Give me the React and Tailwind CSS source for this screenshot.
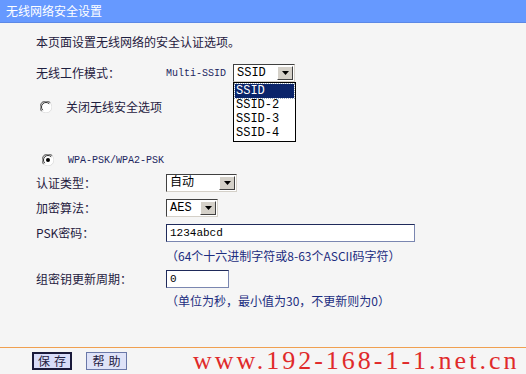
import React from "react";

const cjk = { fontFamily: '"Noto Sans CJK SC", "Noto Sans", sans-serif' };
const mono = { fontFamily: '"Liberation Mono", "Noto Sans CJK SC", monospace' };

function Radio({ checked }) {
  return (
    <svg width="12" height="12" viewBox="0 0 12 12" className="shrink-0">
      <circle cx="6" cy="6" r="5.5" fill="#ffffff" />
      <path d="M10.2 1.8 A5.6 5.6 0 0 0 1.8 10.2" fill="none" stroke="#808080" strokeWidth="1.2" />
      <path d="M9.2 2.8 A4.4 4.4 0 0 0 2.8 9.2" fill="none" stroke="#303030" strokeWidth="1" />
      <path d="M1.8 10.2 A5.6 5.6 0 0 0 10.2 1.8" fill="none" stroke="#e0e0e0" strokeWidth="1" />
      {checked && <circle cx="6" cy="6" r="2" fill="#000000" />}
    </svg>
  );
}

function Select({ value, width }) {
  return (
    <div
      className="h-[18px] flex items-center bg-white border border-t-[#404040] border-l-[#404040] border-r-[#d4d0c8] border-b-[#d4d0c8]"
      style={{ width }}
    >
      <span className="flex-1 pl-[3px] text-[12px] leading-none text-black" style={mono}>
        {value}
      </span>
      <div className="w-[16px] h-[14px] mr-[1px] bg-[#d4d0c8] border border-t-white border-l-white border-r-[#404040] border-b-[#404040] flex items-center justify-center">
        <svg width="7" height="4" viewBox="0 0 7 4">
          <path d="M0 0 H7 L3.5 4 Z" fill="#000" />
        </svg>
      </div>
    </div>
  );
}

function Row({ label, children, className = "" }) {
  return (
    <div className={`h-[18px] flex items-center ${className}`}>
      <div className="w-[130px] text-[12px] text-[#1f2040]" style={cjk}>{label}</div>
      {children}
    </div>
  );
}

export default function App() {
  return (
    <div className="w-[526px] h-[374px] bg-[#f5f5f5] flex flex-col overflow-hidden" style={cjk}>
      <div className="h-[23px] bg-[#6699ff] border-b border-[#5c88e6] flex items-center pl-[6px]">
        <span className="text-white text-[12px] leading-none">无线网络安全设置</span>
      </div>

      <div className="pl-[36px] flex flex-col">
        <div className="h-[18px] mt-[10px] flex items-center text-[12px] text-[#1f2040]">
          本页面设置无线网络的安全认证选项。
        </div>

        <Row label="无线工作模式：" className="mt-[13px]">
          <span className="text-[10px] text-[#1c2660] w-[67px]" style={mono}>Multi-SSID</span>
          <div className="relative">
            <Select value="SSID" width={62} />
            <div className="absolute left-0 top-[18px] w-[63px] bg-white border border-black flex flex-col py-[1px] z-10">
              <div className="h-[14px] mx-[1px] bg-[#0a246a] text-white outline-1 outline-dotted outline-[#9ab] text-[12px] leading-[14px] pl-[1px]" style={mono}>SSID</div>
              <div className="h-[14px] text-[12px] leading-[14px] pl-[2px] text-black" style={mono}>SSID-2</div>
              <div className="h-[14px] text-[12px] leading-[14px] pl-[2px] text-black" style={mono}>SSID-3</div>
              <div className="h-[14px] text-[12px] leading-[14px] pl-[2px] text-black" style={mono}>SSID-4</div>
            </div>
          </div>
        </Row>

        <div className="h-[18px] mt-[16px] flex items-center pl-[4px] gap-[14px]">
          <Radio />
          <span className="text-[12px] text-[#1f2040]">关闭无线安全选项</span>
        </div>

        <div className="h-[18px] mt-[35px] flex items-center pl-[6px] gap-[14px]">
          <Radio checked />
          <span className="text-[10px] text-[#1c2660]" style={mono}>WPA-PSK/WPA2-PSK</span>
        </div>

        <Row label="认证类型：" className="mt-[5px]">
          <Select value="自动" width={71} />
        </Row>

        <Row label="加密算法：" className="mt-[7px]">
          <Select value="AES" width={52} />
        </Row>

        <Row label="PSK密码：" className="mt-[7px]">
          <div className="w-[249px] h-[18px] bg-white border border-t-[#1f2a5a] border-l-[#1f2a5a] border-r-[#7a86b0] border-b-[#7a86b0] flex items-center pl-[3px]">
            <span className="text-[11px] text-black" style={mono}>1234abcd</span>
          </div>
        </Row>

        <Row label="" className="mt-[5px]">
          <span className="text-[12px] text-[#1c2d80]">（64个十六进制字符或8-63个ASCII码字符）</span>
        </Row>

        <Row label="组密钥更新周期：" className="mt-[5px]">
          <div className="w-[63px] h-[18px] bg-white border border-t-[#1f2a5a] border-l-[#1f2a5a] border-r-[#7a86b0] border-b-[#7a86b0] flex items-center pl-[3px]">
            <span className="text-[11px] text-black" style={mono}>0</span>
          </div>
        </Row>

        <Row label="" className="mt-[4px]">
          <span className="text-[12px] text-[#1c2d80]">（单位为秒，最小值为30，不更新则为0）</span>
        </Row>
      </div>

      <div className="mt-[37px] h-px bg-[#f0a050]" />
      <div className="flex items-center h-[26px] pl-[32px]">
        <button className="w-[40px] h-[18px] bg-[#d8dcf8] border-2 border-[#1a1a3a] text-[12px] leading-none text-[#1f2040] tracking-[4px] pl-[4px]">
          保存
        </button>
        <button className="ml-[14px] w-[41px] h-[18px] bg-[#dfe3f8] border border-[#6a78a8] text-[12px] leading-none text-[#1f2040] tracking-[4px] pl-[4px]">
          帮助
        </button>
        <span
          className="ml-[66px] text-[26px] leading-none text-[#e02a2a] tracking-[3px] whitespace-nowrap"
          style={{ fontFamily: '"Liberation Serif", serif' }}
        >
          www.192-168-1-1.net.cn
        </span>
      </div>
    </div>
  );
}
